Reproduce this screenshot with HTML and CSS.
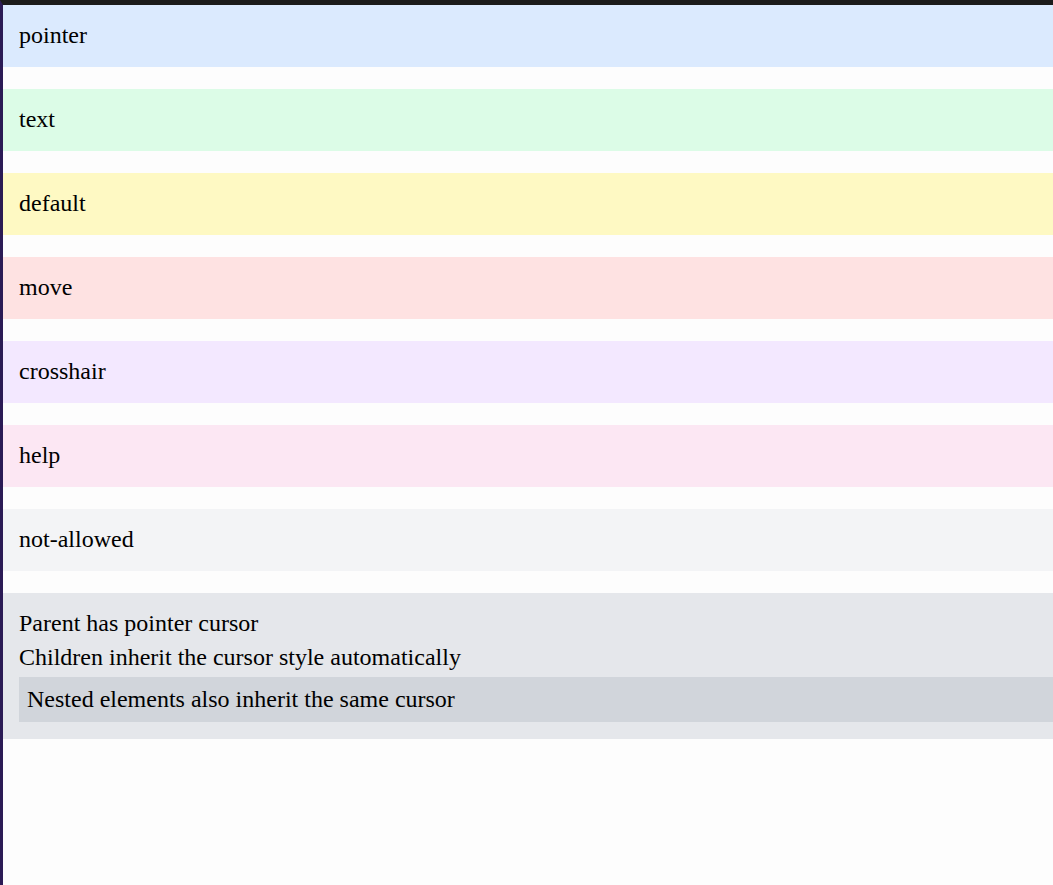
FILE: index.html
```html
<!DOCTYPE html>
<html>
<head>
<meta charset="utf-8">
<link rel="stylesheet" href="styles.css">
</head>
<body>
<div class="frame">
  <div class="box c-pointer">pointer</div>
  <div class="box c-text">text</div>
  <div class="box c-default">default</div>
  <div class="box c-move">move</div>
  <div class="box c-crosshair">crosshair</div>
  <div class="box c-help">help</div>
  <div class="box c-not-allowed">not-allowed</div>
  <div class="box c-parent">
    <p class="line">Parent has pointer cursor</p>
    <p class="line">Children inherit the cursor style automatically</p>
    <div class="nested">Nested elements also inherit the same cursor</div>
  </div>
</div>
</body>
</html>
```

FILE: styles.css
```css
html, body {
  margin: 0;
  padding: 0;
  height: 100%;
}
body {
  background: #fdfdfd;
  font-family: "Liberation Serif", "Times New Roman", serif;
  font-size: 24px;
  line-height: 30px;
  color: #000;
  overflow: hidden;
}
.frame {
  min-height: 100%;
  box-sizing: border-box;
  border-top: 5px solid #1b1b1b;
  border-left: 3px solid #2b1b55;
  display: flex;
  flex-direction: column;
  gap: 22px;
}
.box {
  padding: 15px 16px 17px;
}
.c-pointer { background: #dbeafe; cursor: pointer; }
.c-text { background: #dcfce7; cursor: text; }
.c-default { background: #fef9c3; cursor: default; }
.c-move { background: #fee2e2; cursor: move; }
.c-crosshair { background: #f3e8ff; cursor: crosshair; }
.c-help { background: #fce7f3; cursor: help; }
.c-not-allowed { background: #f3f4f6; cursor: not-allowed; }
.c-parent { background: #e5e7eb; cursor: pointer; padding-right: 0; }
.line {
  margin: 0 0 4px;
}
.nested {
  background: #d1d5db;
  padding: 7px 8px 8px;
  margin-top: 5px;
}
```
